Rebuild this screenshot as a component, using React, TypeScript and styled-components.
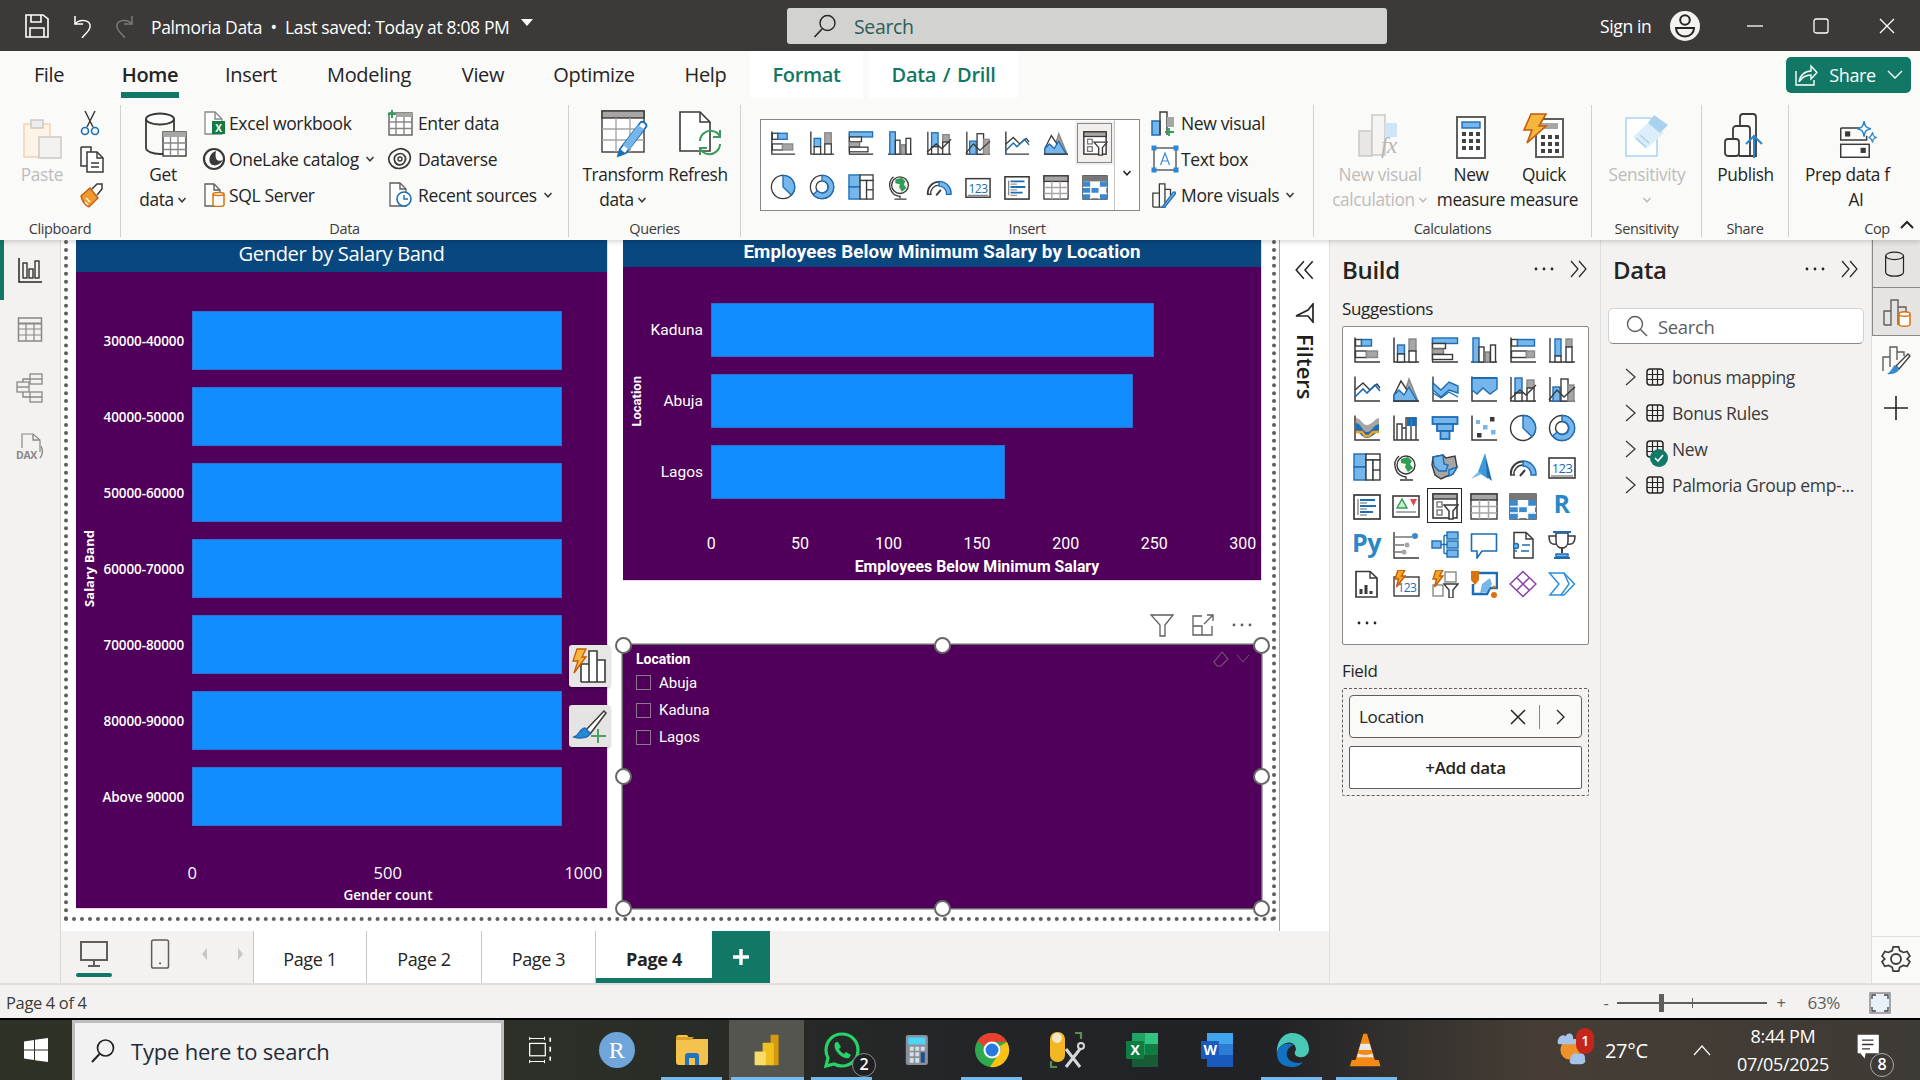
import React from 'react';
import styled, { createGlobalStyle } from 'styled-components';

const D = '#3b3a39';
const B = '#1b6db5';
const L = '#77b6ea';
const G = '#a8a6a4';
const W = '#ffffff';
const TEAL = '#117865';
const FONT = '"Open Sans", "Noto Sans", sans-serif';
const CHART_FONT = 'Roboto, "Liberation Sans", sans-serif';

const Global = createGlobalStyle`
  html, body { margin: 0; padding: 0; background: #f3f2f1; }
  body { font-family: ${FONT}; color: #252423; letter-spacing: -0.022em; }
  * { box-sizing: border-box; }
  svg { display: block; flex: none; }
`;

const Page = styled.div`
  width: 1920px; height: 1080px; overflow: hidden; display: flex; flex-direction: column; position: relative;
`;

/* ---------- Icon helpers ---------- */
const Ico: React.FC<{ s?: number; v?: number; children: React.ReactNode }> = ({ s = 28, v = 28, children }) => (
  <svg width={s} height={s} viewBox={`0 0 ${v} ${v}`} fill="none" strokeWidth={1.4}>{children}</svg>
);
const Axis = () => <path d="M2 1.5V26H27" stroke={D} strokeWidth={1.5} />;
const Base = () => <path d="M1 26H27" stroke={D} strokeWidth={1.5} />;

const mini: Record<string, React.ReactNode> = {
  stackedBar: <><Axis /><rect x="2.5" y="3.5" width="6" height="6.5" fill={W} stroke={D} /><rect x="8.5" y="3.5" width="10" height="6.5" fill={L} stroke={B} /><rect x="2.5" y="15" width="11" height="6.5" fill={W} stroke={D} /><rect x="13.5" y="15" width="11" height="6.5" fill={G} stroke={'#888'} /></>,
  stackedCol: <><Axis /><rect x="5.5" y="9" width="7" height="9" fill={L} stroke={B} /><rect x="5.5" y="18" width="7" height="8" fill={W} stroke={D} /><rect x="17" y="3" width="7" height="12" fill={G} stroke={'#888'} /><rect x="17" y="15" width="7" height="11" fill={W} stroke={D} /></>,
  clusteredBar: <><Base /><path d="M1.5 2V26" stroke={D} /><rect x="1.5" y="2" width="25" height="5.5" fill={L} stroke={B} /><rect x="1.5" y="7.5" width="13" height="5" fill={W} stroke={D} /><rect x="1.5" y="13" width="11" height="5" fill={G} stroke={'#777'} /><rect x="1.5" y="18.5" width="20" height="5" fill={W} stroke={D} /></>,
  clusteredCol: <><Base /><rect x="3" y="2" width="6" height="24" fill={L} stroke={B} /><rect x="9" y="11" width="5" height="15" fill={W} stroke={D} /><rect x="15" y="16" width="5" height="10" fill={G} stroke={'#777'} /><rect x="20.5" y="9" width="5" height="17" fill={W} stroke={D} /></>,
  bar100: <><Axis /><rect x="2.5" y="3.5" width="6" height="6.5" fill={W} stroke={D} /><rect x="8.5" y="3.5" width="17" height="6.5" fill={L} stroke={B} /><rect x="2.5" y="15" width="15" height="6.5" fill={W} stroke={D} /><rect x="17.5" y="15" width="8" height="6.5" fill={G} stroke={'#888'} /></>,
  col100: <><Base /><path d="M2 2V26" stroke={D} /><rect x="7" y="3" width="6" height="17" fill={L} stroke={B} /><rect x="7" y="20" width="6" height="6" fill={W} stroke={D} /><rect x="18" y="3" width="6" height="8" fill={G} stroke={'#888'} /><rect x="18" y="11" width="6" height="15" fill={W} stroke={D} /></>,
  line: <><Axis /><path d="M2 15L10 8L17 15L24 9L27 13" stroke={D} /><path d="M2 22L10 14L14 18L22 10L27 16" stroke={B} strokeWidth={1.6} /></>,
  area: <><path d="M17 4L26 26H10Z" fill={G} stroke="#8a8886" /><path d="M2 20L9 6L15 15L10 26H2Z" fill={W} stroke={D} /><path d="M2 26V20L7 15L12 20L17 12L25 26Z" fill={L} stroke={B} /><Base /></>,
  stackedArea: <><path d="M2 1.5V26H27" stroke={D} /><path d="M2 8L10 15L18 7L27 11V18L18 15L10 22L2 15Z" fill={L} stroke={B} /><path d="M2 18L10 23L18 17L27 22" stroke={B} /></>,
  area100: <><Axis /><path d="M2 3H27V14L20 19L13 13L7 19L2 15Z" fill={L} stroke={B} /><path d="M2 3H27" stroke={B} strokeWidth={2} /></>,
  lineCol: <><Base /><path d="M2 2V26" stroke={D} /><rect x="6" y="3" width="7" height="15" fill={L} stroke={B} /><rect x="6" y="18" width="7" height="8" fill={W} stroke={D} /><rect x="18" y="5" width="7" height="8" fill={G} stroke="#888" /><rect x="18" y="13" width="7" height="13" fill={W} stroke={D} /><path d="M1 24L11 15L17 20L27 10" stroke={D} /></>,
  lineCol2: <><Base /><path d="M2 2V26" stroke={D} /><rect x="5" y="12" width="7" height="14" fill={L} stroke={B} /><rect x="13" y="4" width="7" height="22" fill={W} stroke={D} /><rect x="20" y="10" width="6" height="16" fill={G} stroke="#888" /><path d="M1 25L9 15L16 22L27 12" stroke={D} /></>,
  ribbon: <><Axis /><path d="M3 4C9 5 9 11 14 11S21 5 26 4V13C21 14 19 19 14 19S8 14 3 13Z" fill={G} /><path d="M3 9C9 10 9 18 14 18S20 11 26 10V18C21 19 19 24 14 24S8 19 3 18Z" fill={B} /><path d="M3 18H9L12 22H16L20 18H26" stroke="#f4a020" strokeWidth={2.5} /></>,
  waterfall: <><Axis /><path d="M5 26V10H10V26M10 14H14V26M14 14V4H19V18M19 4H24V26M19 18V26" stroke={D} /><rect x="15" y="4" width="4" height="8" fill={B} /><rect x="20" y="3" width="4.5" height="9" fill={B} /></>,
  funnel: <><rect x="1.5" y="3" width="25" height="7" fill={L} stroke={B} strokeWidth={1.8} /><rect x="6" y="10" width="16" height="7" fill={L} stroke={B} strokeWidth={1.8} /><rect x="9.5" y="17" width="9" height="8" fill={L} stroke={B} strokeWidth={1.8} /></>,
  scatter: <><Axis /><rect x="6" y="6" width="4" height="4" fill={L} /><rect x="20" y="3" width="4.5" height="4.5" fill={D} /><rect x="13" y="11" width="4.5" height="4.5" fill={L} /><rect x="7" y="19" width="4.5" height="4.5" fill={D} /><rect x="21" y="16" width="4.5" height="4.5" fill={L} /></>,
  pie: <><circle cx="14" cy="14" r="12.5" fill={W} stroke={D} /><path d="M14 1.5A12.5 12.5 0 0 1 23 22.7L14 14Z" fill={L} stroke={B} /></>,
  donut: <><circle cx="14" cy="14" r="12.5" stroke={D} fill={W} /><circle cx="14" cy="14" r="6.5" stroke={D} fill={W} /><path d="M14 1.5A12.5 12.5 0 1 1 4.5 22L9.2 18A6.5 6.5 0 1 0 14 7.5Z" fill={L} stroke={B} /></>,
  treemap: <><rect x="1" y="1" width="12" height="13" fill={L} stroke={B} /><rect x="1" y="14" width="12" height="13" fill={L} stroke={B} /><rect x="13" y="1" width="14" height="6" fill={W} stroke={D} /><rect x="13" y="7" width="7" height="20" fill={W} stroke={D} /><rect x="20" y="7" width="7" height="20" fill={W} stroke={D} /><path d="M20 17H27" stroke={D} /></>,
  globe: <><circle cx="14" cy="12" r="9" fill="#f4f8f2" stroke={D} /><path d="M9 6L16 4L20 8L18 11L21 15L16 19L13 14L14 11L9 10Z" fill="#2f9e58" /><path d="M7 3A12 12 0 0 0 14 24V26M8 27H21" stroke={D} /></>,
  filledMap: <><path d="M2 4L12 2L15 5L24 3L26 14L22 21L14 24L10 26L4 22L1 12Z" fill={G} stroke={D} /><path d="M2 4L12 2L13 11L17 12L15 18H8L3 13Z" fill={L} stroke={B} /><path d="M18 17L26 14L22 21L18 23Z" fill={L} stroke={B} /></>,
  azure: <><path d="M15 0L18 26L8 19Z" fill="#3f9bd8" /><path d="M15 0L22 28L17 24Z" fill="#1f6fb0" /><path d="M8 19L1 26L12 21Z" fill="#76bde8" /></>,
  gauge: <><path d="M2 22A12 12 0 0 1 14 8.5" stroke={D} strokeWidth={2} /><path d="M5 22A9 9 0 0 1 14 12" stroke={D} /><path d="M14 8A13 13 0 0 1 27 22H22A8 8 0 0 0 14 13Z" fill={L} stroke={B} /><path d="M11 23L16 17" stroke={D} strokeWidth={2} /><path d="M1 22H6" stroke={D} /></>,
  card: <><rect x="1" y="5" width="26" height="20" fill={W} stroke={D} strokeWidth={1.6} /><text x="14" y="20" fontSize="13" fill={B} textAnchor="middle" fontFamily="Open Sans" letterSpacing="-0.6">123</text><path d="M3 23H25" stroke="#888" /></>,
  multirow: <><rect x="1" y="3" width="26" height="24" fill={W} stroke={D} strokeWidth={1.7} /><path d="M5 7V23" stroke="#888" /><path d="M7 8H22M7 14H23M7 20H20" stroke={B} strokeWidth={2} /><path d="M7 11H14M7 17H14M7 23H14" stroke="#999" /></>,
  kpi: <><rect x="1" y="4" width="26" height="21" fill={W} stroke={D} strokeWidth={1.6} /><path d="M5 16L10 7L15 16Z" fill="#c7ead0" stroke="#2f9e58" /><path d="M18 7H25L21.5 14Z" fill="#e5454c" /><path d="M4 20H24" stroke="#888" /></>,
  slicer: <><rect x="2" y="2" width="24" height="24" fill={W} stroke={D} strokeWidth={1.6} /><rect x="2" y="2" width="24" height="5" fill={G} stroke={D} /><rect x="6" y="10" width="5" height="5" fill={W} stroke={'#777'} /><rect x="6" y="18" width="5" height="5" fill={W} stroke={'#777'} /><path d="M13 13H27L22 19V27H18V19Z" fill={W} stroke={D} strokeWidth={1.5} /></>,
  table: <><rect x="1" y="2" width="26" height="25" fill={W} stroke={D} /><rect x="1" y="2" width="26" height="6" fill={G} stroke={D} /><path d="M1 14.5H27M1 21H27M9.5 8V27M18.5 8V27" stroke={G} strokeWidth={1.5} /></>,
  matrix: <><rect x="1" y="2" width="26" height="25" fill={W} stroke={D} /><rect x="1" y="2" width="26" height="6" fill={'#777'} /><rect x="1" y="8" width="8.5" height="19" fill={'#3a8ad0'} /><rect x="9.5" y="14" width="9" height="6.5" fill={'#3a8ad0'} /><rect x="18.5" y="8" width="8.5" height="6" fill={'#3a8ad0'} /><rect x="18.5" y="20.5" width="8.5" height="6.5" fill={'#3a8ad0'} /><path d="M1 14.5H27M1 21H27M9.5 8V27M18.5 8V27" stroke={W} /></>,
  influencers: <><path d="M2 1V27H27" stroke={D} /><path d="M2 6H20M2 14H12M2 21H10" stroke="#777" /><circle cx="23" cy="5" r="3" fill={'#3a8ad0'} /><circle cx="15" cy="14" r="2.5" fill={G} /><circle cx="12" cy="21" r="2.5" fill={G} /></>,
  decomp: <><rect x="1" y="10" width="9" height="7" fill={L} stroke={B} /><rect x="16" y="1" width="11" height="7" fill={L} stroke={B} /><rect x="16" y="10" width="11" height="7" fill={L} stroke={B} /><rect x="16" y="19" width="11" height="7" fill={L} stroke={B} /><path d="M10 13.5H16M13 4.5V22.5M13 4.5H16M13 22.5H16" stroke={B} /></>,
  qna: <><path d="M1.5 3H26.5V20H12L7 27V20H1.5Z" fill={W} stroke={B} strokeWidth={1.6} /></>,
  narrative: <><path d="M5 1.5H17L24 8V27H5Z" fill={W} stroke={D} strokeWidth={1.5} /><path d="M17 1.5V8H24" stroke={D} /><circle cx="7" cy="15" r="2.5" fill={L} stroke={B} /><path d="M13 14H21M5 20H8M12 20H20" stroke={B} strokeWidth={1.5} /></>,
  trophy: <><path d="M8 2H20V10C20 15 17 17 14 17S8 15 8 10Z" fill={W} stroke={D} strokeWidth={1.5} /><path d="M5 0.8H23" stroke={B} strokeWidth={2.5} /><path d="M8 5H1C1 12 4 14 8 13M20 5H27C27 12 24 14 20 13" stroke={D} strokeWidth={1.5} /><path d="M14 17V22" stroke={D} strokeWidth={2} /><path d="M8 26V23H20V26Z" fill={L} stroke={B} /><path d="M6 27H22" stroke={B} strokeWidth={2} /></>,
  paginated: <><path d="M3 1.5H17L24 8V27H3Z" fill={W} stroke={D} strokeWidth={1.7} /><path d="M17 1.5V8H24" stroke={D} /><path d="M8 24V19M13 24V15M18 24V21" stroke={D} strokeWidth={3} /></>,
  quickCard: <><rect x="2" y="7" width="25" height="19" fill={W} stroke={D} strokeWidth={1.4} /><text x="15" y="22" fontSize="12" fill={B} textAnchor="middle" fontFamily="Open Sans" letterSpacing="-0.6">123</text><path d="M6 0H13L9.5 6H13L4.5 17L6.5 9H3Z" fill="#f6a623" stroke="#c55a0b" /></>,
  quickSlicer: <><rect x="14" y="2" width="11" height="10" fill={W} stroke={'#8a8886'} /><rect x="2" y="15" width="10" height="11" fill={W} stroke={'#8a8886'} /><path d="M13 14H27L22 20V28H18V20Z" fill={W} stroke={D} strokeWidth={1.4} /><path d="M5 0H12L8.5 6H12L3.5 17L5.5 9H2Z" fill="#f6a623" stroke="#c55a0b" /></>,
  shapePin: <><path d="M8 3H27V18H20L17 24H3V14" stroke={B} strokeWidth={2.5} fill={W} /><path d="M12 14L20 8L22 14L17 22L10 23Z" fill={L} /><path d="M1 1H9V10L5 15L1 10Z" fill="#d9730d" /><circle cx="24" cy="25" r="3" fill="#d9730d" /><circle cx="24" cy="17" r="1.6" fill="#d9730d" /></>,
  powerApps: <><path d="M14 1.5L27 14L14 26.5L1 14Z" stroke="#8a3ea8" strokeWidth={1.5} /><path d="M8 8L20 20M20 8L8 20" stroke="#8a3ea8" strokeWidth={1.5} /></>,
  automate: <><path d="M1.5 3H16L26.5 14L16 25H2L11 14Z" stroke="#2b8fdc" strokeWidth={1.5} /><path d="M16 3L21 14L13 25" stroke="#2b8fdc" strokeWidth={1.5} /></>,
};

const Mini: React.FC<{ n: string; s?: number }> = ({ n, s = 28 }) => <Ico s={s}>{mini[n]}</Ico>;

/* ---------- Title bar ---------- */
const TitleBar = styled.header`
  height: 51px; background: #3b3a39; color: #fff; display: grid; grid-template-columns: 787px 600px 1fr; align-items: center; flex: none;
`;
const TitleLeft = styled.div`display: flex; align-items: center; padding-left: 24px;`;
const TitleText = styled.span`font-size: 17.5px; white-space: nowrap; margin-left: 15px; padding-top: 3px;`;
const Caret = styled.span`
  width: 0; height: 0; border-left: 6px solid transparent; border-right: 6px solid transparent; border-top: 7px solid #fff; margin-left: 11px; margin-top: -6px;
`;
const QuickBtn = styled.span<{ $w: number }>`width: ${p => p.$w}px; display: flex; align-items: center;`;
const SearchBar = styled.div`
  height: 36px; background: #d2d2d0; border-radius: 3px; display: flex; align-items: center; padding-left: 26px; gap: 17px;
  font-size: 19.5px; color: #2d5e58;
  & > span { padding-top: 2px; }
`;
const TitleRight = styled.div`display: flex; align-items: center; padding-left: 213px; font-size: 17.5px; white-space: nowrap; & > span:first-child { padding-top: 1px; width: 54px; }`;
const Avatar = styled.span`
  width: 30px; height: 30px; border-radius: 50%; background: #f3f2f1; display: flex; align-items: center; justify-content: center; margin-left: 16px; margin-right: 22px;
`;
const WinBtn = styled.span`width: 66px; display: flex; justify-content: center;`;

/* ---------- Ribbon ---------- */
const Ribbon = styled.section`
  height: 189px; background: #fafaf9; flex: none; position: relative; z-index: 2; box-shadow: 0 2px 5px rgba(0,0,0,.16); display: flex; flex-direction: column;
`;
const TabRow = styled.nav`height: 49px; display: flex; align-items: flex-start; font-size: 20px; flex: none;`;
const Tab = styled.div<{ $w: number; $ml: number; $on?: boolean }>`
  width: ${p => p.$w}px; margin-left: ${p => p.$ml}px; height: 47px; line-height: 47px; text-align: center; white-space: nowrap; display: flex; justify-content: center;
  border-bottom: ${p => (p.$on ? `6px solid ${TEAL}` : '0')};
  font-weight: ${p => (p.$on ? 600 : 400)};
`;
const ContextTab = styled.div<{ $w: number; $ml: number }>`
  width: ${p => p.$w}px; margin-left: ${p => p.$ml}px; height: 47px; line-height: 47px; text-align: center; background: #fff; color: ${TEAL}; font-weight: 600; white-space: nowrap; word-spacing: 2px;
`;
const ShareBtn = styled.button`
  margin-left: auto; margin-right: 9px; margin-top: 6px; width: 125px; height: 36px; background: ${TEAL}; border: 0; border-radius: 5px; color: #fff; font: 400 18px ${FONT}; letter-spacing: -0.02em;
  display: flex; align-items: center; justify-content: center; gap: 11px;
`;
const Groups = styled.div`display: flex; flex: 1; min-height: 0;`;
const Group = styled.div<{ $w: number; $end?: boolean }>`
  width: ${p => p.$w}px; margin: 5px 0 3px; display: flex; flex-direction: column; flex: none; position: relative;
  border-right: ${p => (p.$end ? '0' : '1px solid #d2d0ce')};
`;
const GroupBody = styled.div`flex: 1; display: flex; align-items: flex-start; min-height: 0;`;
const GroupLabel = styled.div<{ $pl?: number }>`
  height: 16px; line-height: 16px; font-size: 14.5px; text-align: center; color: #3b3a39; padding-left: ${p => p.$pl ?? 0}px; white-space: nowrap;
`;
const Large = styled.div<{ $w: number; $ml?: number; $dim?: boolean }>`
  width: ${p => p.$w}px; margin-left: ${p => p.$ml ?? 0}px; padding-top: 5px; display: flex; flex-direction: column; align-items: center; flex: none;
  font-size: 17.3px; line-height: 25px; white-space: nowrap; color: ${p => (p.$dim ? '#bebcba' : '#252423')};
`;
const LargeIcon = styled.div<{ $nudge?: number }>`height: 52px; display: flex; align-items: flex-end; justify-content: center; padding-bottom: 3px; margin-left: ${p => p.$nudge ?? 0}px;`;
const LabelLine = styled.div`display: flex; align-items: center; gap: 3px; height: 25px;`;
const LeftLine = styled.div`width: 86px; height: 25px; margin-right: 16px;`;
const SmallCol = styled.div<{ $w?: number; $ml?: number }>`
  width: ${p => (p.$w ? `${p.$w}px` : 'auto')}; margin-left: ${p => p.$ml ?? 0}px; display: flex; flex-direction: column; flex: none;
`;
const SmallRow = styled.div<{ $iw: number }>`
  height: 36px; display: flex; align-items: center; font-size: 17.5px; white-space: nowrap;
  & > span:first-child { width: ${p => p.$iw}px; display: flex; flex: none; }
`;
const Chev = styled.span<{ $ml?: number }>`display: inline-flex; margin-left: ${p => p.$ml ?? 4}px;`;
const Gallery = styled.div`
  margin: 14px 0 0 19px; width: 380px; height: 92px; border: 1px solid #8a8886; background: #fff; display: grid; grid-template-columns: 1fr 25px; flex: none;
`;
const GalleryGrid = styled.div`
  display: grid; grid-template-columns: repeat(9, 39px); grid-auto-rows: 44px; padding: 1px 0 0 2px;
`;
const GalleryCell = styled.div<{ $on?: boolean }>`
  display: flex; align-items: center; justify-content: center;
  ${p => p.$on && 'background: #f0efee; outline: 1px solid #8a8886; outline-offset: -3px;'}
`;
const GalleryMore = styled.div`border-left: 1px solid #c8c6c4; display: flex; align-items: flex-end; justify-content: center; padding-bottom: 32px;`;
const CollapseCaret = styled.span`position: absolute; right: 6px; bottom: 8px;`;

const ChevDown: React.FC<{ c?: string; s?: number }> = ({ c = '#3b3a39', s = 10 }) => (
  <svg width={s} height={s} viewBox="0 0 10 10" fill="none"><path d="M1.5 3L5 6.8L8.5 3" stroke={c} strokeWidth={1.5} /></svg>
);

/* ---------- Workspace ---------- */
const Workspace = styled.main`flex: 1; display: flex; min-height: 0; background: #f3f2f1;`;
const LeftRail = styled.aside`width: 61px; border-right: 1px solid #d8d6d4; flex: none;`;
const RailItem = styled.div<{ $on?: boolean }>`
  height: 59px; display: flex; align-items: center; justify-content: center; position: relative; padding-right: 0;
  ${p => p.$on && `&::before { content: ''; position: absolute; left: 0; top: 0; width: 4px; height: 60px; background: ${TEAL}; }`}
`;
const Center = styled.div`width: 1268px; display: flex; flex-direction: column; flex: none;`;
const CanvasRow = styled.div`height: 691px; display: flex; background: #fff;`;
const ReportArea = styled.div`width: 1219px; border-right: 1px solid #a8a6a4; padding: 0 3px 0 3px; flex: none;`;
const ReportPage = styled.div`
  width: 1212px; height: 681px; border-left: 4px dotted #5f5e5c; border-right: 4px dotted #5f5e5c; border-bottom: 4px dotted #5f5e5c; padding: 0 10px 0 8px;
  display: grid; grid-template-columns: 531px 638px; column-gap: 16px; position: relative; align-items: start;
`;
const Visual = styled.div<{ $h: number }>`height: ${p => p.$h}px; background: #50005a; color: #fff; display: flex; flex-direction: column; box-shadow: 0 1px 0 #e9d9ee, 1px 0 0 #e9d9ee;`;
const VisualTitle = styled.div<{ $h: number; $alt?: boolean }>`
  height: ${p => p.$h}px; flex: none; background: #09477f; text-align: center; color: #fff;
  font: ${p => (p.$alt ? `700 18.8px/24px ${CHART_FONT}` : `500 20.2px/${p.$h - 6}px ${FONT}`)};
  letter-spacing: ${p => (p.$alt ? '0.1px' : '-0.4px')};
`;
const Plot = styled.div<{ $top: number }>`display: flex; padding-top: ${p => p.$top}px; align-items: center;`;
const YTitle = styled.div<{ $w: number; $alt?: boolean }>`
  writing-mode: vertical-rl; transform: rotate(180deg); width: ${p => p.$w}px; text-align: center; flex: none; white-space: nowrap; display: flex; align-items: center;
  font: 700 ${p => (p.$alt ? `13px ${CHART_FONT}` : `13px ${FONT}`)}; letter-spacing: 0;
`;
const Rows = styled.div<{ $gap: number }>`display: flex; flex-direction: column; gap: ${p => p.$gap}px;`;
const BarRow = styled.div<{ $h: number }>`display: flex; align-items: center; height: ${p => p.$h}px;`;
const CatLabel = styled.div<{ $w: number; $alt?: boolean }>`
  width: ${p => p.$w}px; padding-right: 8px; text-align: right; white-space: nowrap; flex: none;
  font: ${p => (p.$alt ? `400 15.5px ${CHART_FONT}` : `600 13.5px ${FONT}`)}; letter-spacing: ${p => (p.$alt ? '0' : '-0.1px')};
`;
const Bar = styled.div`height: 100%; background: #118dff; border: 1px solid #2f6ed0;`;
const Ticks = styled.div<{ $n: number; $cell: number; $ml: number; $mt: number; $alt?: boolean }>`
  display: grid; grid-template-columns: repeat(${p => p.$n}, ${p => p.$cell}px); margin-left: ${p => p.$ml}px; margin-top: ${p => p.$mt}px; text-align: center;
  font: ${p => (p.$alt ? `400 16px/20px ${CHART_FONT}` : `400 16.5px/20px ${FONT}`)}; letter-spacing: 0;
`;
const XTitle = styled.div<{ $w: number; $mt: number; $alt?: boolean }>`
  width: ${p => p.$w}px; text-align: center; margin-top: ${p => p.$mt}px; white-space: nowrap;
  font: ${p => (p.$alt ? `700 15.8px/18px ${CHART_FONT}` : `600 13.5px/18px ${FONT}`)}; letter-spacing: 0;
`;
const RightStack = styled.div`display: flex; flex-direction: column; gap: 65px;`;
const Slicer = styled.div`
  height: 263px; background: #50005a; box-shadow: 0 0 0 1.5px #666; color: #fff; position: relative; padding: 6px 13px;
`;
const SlicerTitle = styled.div`font: 700 14px/16px ${CHART_FONT}; letter-spacing: 0;`;
const SlicerItem = styled.div`display: flex; align-items: center; gap: 8px; height: 27.4px; font: 400 15px ${CHART_FONT}; letter-spacing: 0;`;
const SlicerList = styled.div`margin-top: 2px;`;
const Check = styled.span`width: 15px; height: 15px; border: 1px solid #8a7a8d; flex: none;`;
const SlicerTools = styled.div`position: absolute; right: 11px; top: 5px; display: flex; gap: 6px; align-items: center;`;
const Handle = styled.span<{ $l: string; $t: string }>`
  position: absolute; left: ${p => p.$l}; top: ${p => p.$t}; width: 17px; height: 17px; margin: -8.5px 0 0 -8.5px; background: #fff; border: 2.5px solid #666; border-radius: 50%;
`;
const VisualHead = styled.div`position: absolute; right: 9px; top: -32px; display: flex; align-items: center; gap: 18px;`;
const Float = styled.div<{ $top: number; $alt?: boolean }>`
  position: absolute; left: 501px; top: ${p => p.$top}px; width: 41px; height: 42px; background: ${p => (p.$alt ? '#e6e4e2' : '#e8e6e4')}; border-radius: 3px; box-shadow: 0 1px 3px rgba(0,0,0,.3);
  display: flex; align-items: center; justify-content: center;
`;
const FiltersPane = styled.div`
  flex: 1; background: #fff; display: flex; flex-direction: column; align-items: center; padding: 19px 0 0 0;
`;
const FilterIconSlot = styled.div`margin-top: 22px;`;
const FiltersText = styled.div`writing-mode: vertical-rl; font: 600 22px/24px ${FONT}; margin-top: 11px; letter-spacing: 0; color: #201f1e; margin-left: 2px;`;
const PageBar = styled.div`height: 52px; display: flex; align-items: stretch;`;
const Devices = styled.div`width: 192px; display: flex; align-items: center; position: relative; padding-left: 15px; flex: none;`;
const DeviceBtn = styled.span<{ $w: number; $on?: boolean; $ml?: number }>`
  width: ${p => p.$w}px; margin-left: ${p => p.$ml ?? 0}px; height: 52px; display: flex; align-items: center; justify-content: center; position: relative; flex: none; padding-bottom: 6px;
  ${p => p.$on && `&::after { content: ''; position: absolute; left: 0; right: 0; bottom: 6px; height: 4px; border-radius: 2px; background: ${TEAL}; }`}
`;
const PagerArrows = styled.span`margin-left: 25px; padding-bottom: 6px;`;
const PageTab = styled.div<{ $w: number; $on?: boolean }>`
  width: ${p => p.$w}px; background: #fff; border-left: 1px solid #c8c6c4; display: flex; align-items: center; justify-content: center; font-size: 18px; padding-top: 3px; flex: none;
  font-weight: ${p => (p.$on ? 700 : 400)};
  box-shadow: ${p => (p.$on ? `inset 0 -5px 0 ${TEAL}` : 'none')};
`;
const AddPage = styled.div`width: 58px; background: ${TEAL}; display: flex; align-items: center; justify-content: center; color: #fff;`;

/* ---------- Side panes ---------- */
const Pane = styled.aside`width: 271px; border-left: 1px solid #e1dfdd; background: #f3f2f1; flex: none;`;
const PaneHead = styled.div`height: 60px; padding: 0 12px 2px 12px; display: flex; align-items: center; justify-content: space-between;`;
const PaneTitle = styled.h2`margin: 0; font: 600 24px ${FONT}; letter-spacing: -0.3px; color: #252423;`;
const PaneTools = styled.div`display: flex; align-items: center; gap: 14px;`;
const BuildBody = styled.div`padding: 0 12px 0 12px;`;
const Caption = styled.div<{ $mt?: number }>`font-size: 17px; line-height: 18px; margin-top: ${p => p.$mt ?? 0}px;`;
const SuggestBox = styled.div`
  margin-top: 8px; width: 247px; height: 319px; background: #fff; border: 1px solid #8a8886; border-radius: 2px; padding: 3px 0 0 4px;
  display: grid; grid-template-columns: repeat(6, 39px); grid-auto-rows: 39px;
`;
const SuggestCell = styled.div<{ $on?: boolean }>`
  display: flex; align-items: center; justify-content: center;
  ${p => p.$on && 'outline: 1.5px solid #252423; outline-offset: -3px;'}
`;
const LetterIcon = styled.span<{ $s: number }>`font: 700 ${p => p.$s}px/1 ${FONT}; color: #2b88c8; letter-spacing: -0.5px; margin-top: -4px;`;
const MoreDots = styled.div`display: flex; align-items: center; justify-content: center; font-size: 20px;`;
const DropZone = styled.div`
  margin-top: 8px; width: 247px; height: 108px; border: 1px dashed #605e5c; border-radius: 2px; padding: 6px; display: flex; flex-direction: column; gap: 8px;
`;
const FieldPill = styled.div`
  height: 43px; border: 1px solid #605e5c; border-radius: 4px; background: #fafaf9; display: flex; align-items: center; padding: 0 13px 0 9px; font-size: 17px;
`;
const FieldName = styled.span`flex: 1;`;
const FieldDivider = styled.span`width: 1.5px; height: 24px; background: #8a8886; margin: 0 12px;`;
const AddData = styled.div`
  height: 43px; border: 1px solid #605e5c; border-radius: 2px; background: #fff; display: flex; align-items: center; justify-content: center; font-weight: 600; font-size: 17px;
`;
const DataSearch = styled.div`
  margin: 8px 7px 0 7px; height: 36px; background: #fff; border: 1px solid #d2d0ce; border-bottom: 1px solid #8a8886; border-radius: 5px; display: flex; align-items: center; padding-left: 17px; gap: 10px;
  font-size: 18.5px; color: #605e5c;
`;
const Tree = styled.div`margin-top: 15px;`;
const TreeRow = styled.div`height: 36px; display: flex; align-items: center; padding-left: 23px; font-size: 17.5px; color: #3b3a39; white-space: nowrap; position: relative;`;
const TreeGap = styled.span<{ $w: number }>`width: ${p => p.$w}px; flex: none;`;
const Badge = styled.span`
  position: absolute; left: 49px; top: 18px; width: 18px; height: 18px; border-radius: 50%; background: ${TEAL}; display: flex; align-items: center; justify-content: center;
`;
const RightRail = styled.aside`width: 49px; background: #fafaf9; border-left: 1px solid #e1dfdd; display: flex; flex-direction: column; flex: none;`;
const RailTab = styled.div<{ $h: number; $on?: boolean }>`
  height: ${p => p.$h}px; display: flex; align-items: center; justify-content: center; flex: none;
  ${p => p.$on && 'background: #e6e4e2; border: 1px solid #8a8886; border-width: 0 0 1.5px 1.5px;'}
`;
const RailBottom = styled.div`margin-top: auto; height: 47px; border-top: 1px solid #e1dfdd; display: flex; align-items: center; justify-content: center; padding-bottom: 2px;`;

/* ---------- Status bar ---------- */
const StatusBar = styled.footer`
  height: 35px; flex: none; border-top: 2px solid #e1dfdd; background: #f3f2f1; display: flex; align-items: center; padding: 2px 0 0 6px; font-size: 16.5px; color: #3b3a39;
`;
const Zoom = styled.div`margin-left: auto; display: flex; align-items: center; color: #605e5c;`;
const ZoomTrack = styled.div`width: 150px; height: 2px; background: #605e5c; position: relative; margin: 0 9px;`;
const ZoomThumb = styled.span`position: absolute; left: 42px; top: -8px; width: 5px; height: 18px; background: #605e5c;`;
const ZoomTick = styled.span`position: absolute; left: 75px; top: -4px; width: 1px; height: 10px; background: #605e5c;`;
const ZoomPct = styled.span`margin: 0 29px 0 22px; font-size: 17px;`;
const FitBox = styled.span`margin-right: 29px; display: flex;`;

/* ---------- Taskbar ---------- */
const Taskbar = styled.div`
  height: 62px; flex: none; border-top: 2px solid #000; display: flex; align-items: stretch; color: #fff;
  background: linear-gradient(90deg, #2e3226 0%, #2c2f27 30%, #232427 52%, #212226 66%, #463e35 80%, #3e3a35 100%);
`;
const StartBtn = styled.div`width: 72px; display: flex; align-items: center; justify-content: center;`;
const TaskSearch = styled.div`
  width: 432px; background: #f2f2f2; border: 3px solid #bdbdbd; border-bottom: 0; display: flex; align-items: center; padding: 0 0 2px 15px; gap: 15px; color: #1f2b3a; font-size: 22px; letter-spacing: -0.2px;
`;
const TaskApp = styled.div<{ $open?: boolean; $active?: boolean; $pl?: number }>`
  width: 75px; padding-left: ${p => p.$pl ?? 0}px; display: flex; align-items: center; justify-content: center; position: relative; flex: none;
  background: ${p => (p.$active ? '#55554f' : 'transparent')};
  ${p => p.$open && `&::after { content: ''; position: absolute; left: ${p.$active ? 2 : 7}px; right: ${p.$active ? 0 : 7}px; bottom: 0; height: 3px; background: #76b9ed; }`}
`;
const RoundR = styled.span`
  width: 36px; height: 36px; border-radius: 50%; background: #6fa5da; font: 400 24px/36px "Liberation Serif", serif; text-align: center; color: #fff;
`;
const CountBadge = styled.span`
  position: absolute; right: 3px; bottom: 3px; width: 24px; height: 24px; border: 1.5px solid #8a8a8a; border-radius: 50%; background: #1f2023; font: 600 16px/21px ${FONT}; text-align: center; color: #fff;
`;
const Tray = styled.div`width: 516px; padding-left: 150px; display: flex; align-items: center; position: relative; flex: none;`;
const Temp = styled.span`font-size: 20px; margin-left: 11px; width: 80px; margin-right: 8px;`;
const Clock = styled.div`margin-left: 7px; width: 130px; text-align: center; font-size: 18px; line-height: 28px;`;
const Notify = styled.div`width: 50px; margin-left: -3px; display: flex; justify-content: center; position: relative; height: 100%; align-items: center; padding-bottom: 4px;`;
const TrayBadge = styled.span`
  position: absolute; left: 25px; bottom: 3px; width: 24px; height: 24px; border: 1.5px solid #aaa; border-radius: 50%; background: #3e3a35; font: 600 16px/21px ${FONT}; text-align: center;
`;
const WeatherWrap = styled.div`position: relative; width: 40px; height: 44px;`;
const WeatherBadge = styled.span`
  position: absolute; right: 0; top: 0; width: 18px; height: 26px; border-radius: 9px; background: #c4261d; font: 600 14px/26px ${FONT}; text-align: center;
`;

/* ---------- Ribbon icons ---------- */
const I = {
  save: <Ico s={26} v={26}><path d="M2 2H19L24 6V24H2Z" stroke="#fff" strokeWidth={1.6} /><path d="M7 2V9H17V2M6 24V15H20V24" stroke="#fff" strokeWidth={1.6} /></Ico>,
  undo: <Ico s={24} v={24}><path d="M5 2V10H13" stroke="#fff" strokeWidth={1.5} /><path d="M5 10C10 4 21 6 20 13C19.5 17 15 20 12 24" stroke="#fff" strokeWidth={1.5} /></Ico>,
  redo: <Ico s={24} v={24}><path d="M19 2V10H11" stroke="#7b7a79" strokeWidth={1.5} /><path d="M19 10C14 4 3 6 4 13C4.5 17 9 20 12 24" stroke="#7b7a79" strokeWidth={1.5} /></Ico>,
  search: <Ico s={24} v={24}><circle cx="14.5" cy="9" r="7.5" stroke="#252423" strokeWidth={1.4} /><path d="M9 15L1.5 23" stroke="#252423" strokeWidth={1.6} /></Ico>,
  person: <Ico s={26} v={26}><circle cx="13" cy="7" r="4.8" stroke="#252423" strokeWidth={2} /><path d="M4 15H22C22 20 18 23.5 13 23.5S4 20 4 15Z" stroke="#252423" strokeWidth={2} /></Ico>,
  paste: <Ico s={42} v={42}><rect x="3" y="7" width="26" height="33" fill="#fdf3e6" stroke="#f2d3ae" strokeWidth={1.5} /><rect x="10" y="3" width="12" height="8" fill="#efeeed" stroke="#c8c6c4" /><rect x="18" y="20" width="22" height="21" fill="#f3f2f1" stroke="#c8c6c4" /></Ico>,
  cut: <Ico s={26} v={26}><path d="M8 1L16 17M18 1L10 17" stroke={D} strokeWidth={1.5} /><circle cx="8" cy="21" r="3.5" stroke={B} strokeWidth={1.6} /><circle cx="18" cy="21" r="3.5" stroke={B} strokeWidth={1.6} /></Ico>,
  copy: <Ico s={28} v={28}><path d="M4 2H14V7M4 2V21H10" stroke={D} strokeWidth={1.5} /><path d="M10 7H20L26 13V27H10Z" fill="#fff" stroke={D} strokeWidth={1.5} /><path d="M20 7V13H26M14 18H22M14 22H22" stroke={D} /></Ico>,
  painter: <Ico s={28} v={28}><path d="M4 15L13 7L21 17L12 26C8 24 5 20 4 15Z" fill="#f09a2d" stroke="#bf5a0c" strokeWidth={1.3} /><path d="M15 8L20 3H25V8L20 14" fill="#fff" stroke={D} strokeWidth={1.5} /><path d="M9 17L13 21M8 21L11 24" stroke="#fff" /></Ico>,
  getData: <Ico s={48} v={48}><ellipse cx="19" cy="8" rx="14" ry="5.5" fill="#fff" stroke={D} strokeWidth={1.8} /><path d="M5 8V37C5 40 11 43 19 43H22M33 8V20" stroke={D} strokeWidth={1.8} /><rect x="22" y="21" width="23" height="24" fill="#fff" stroke={D} strokeWidth={1.4} /><rect x="22" y="21" width="23" height="5" fill="#a8a6a4" /><path d="M22 32H45M22 38.5H45M29.5 26V45M37 26V45" stroke={'#8a8886'} /></Ico>,
  excel: <Ico s={24} v={24}><path d="M3 1H13L20 8V23H3Z" fill="#fff" stroke={'#8a8886'} strokeWidth={1.3} /><path d="M13 1V8H20" stroke={'#8a8886'} /><rect x="10" y="10" width="13" height="13" fill="#107c41" /><text x="16.5" y="20.5" fontSize="10" fontWeight="700" fill="#fff" textAnchor="middle" fontFamily="Open Sans">X</text></Ico>,
  onelake: <Ico s={24} v={24}><circle cx="12" cy="12" r="10" fill="#fff" stroke={D} strokeWidth={2.2} /><path d="M14 4C7 6 6 14 9 17C12 20 18 18 21 13C17 15 12 14 14 4Z" fill={D} /></Ico>,
  sql: <Ico s={24} v={24}><path d="M3 1H12L18 7V23H3Z" fill="#fff" stroke={'#605e5c'} strokeWidth={1.3} /><path d="M12 1V7H18" stroke={'#605e5c'} /><path d="M11 11C11 9 22 9 22 11V22C22 24 11 24 11 22Z" fill="#fff" stroke="#d9730d" strokeWidth={1.5} /><path d="M11 11C11 13 22 13 22 11" stroke="#d9730d" strokeWidth={1.5} /></Ico>,
  enter: <Ico s={26} v={26}><rect x="2" y="3" width="23" height="22" fill="#fff" stroke={'#605e5c'} /><rect x="9" y="3" width="16" height="4" fill={G} /><path d="M2 12H25M2 18.500H25M9 7V25M17 7V25" stroke={'#8a8886'} /><path d="M5 0V8M1 4H9" stroke="#2f9e58" strokeWidth={2} /></Ico>,
  dataverse: <Ico s={26} v={26}><path d="M9 4C16 0 25 6 23 14C21 22 11 25 5 20C-1 14 2 7 9 4Z" stroke={D} strokeWidth={1.7} /><path d="M11 8C16 6 20 11 18 15C16 20 10 20 8 16C6 12 8 9 11 8Z" stroke={D} strokeWidth={1.7} /><circle cx="13" cy="13" r="2" stroke={D} /></Ico>,
  recent: <Ico s={26} v={26}><path d="M3 1H13L19 7V24H3Z" fill="#fff" stroke={'#605e5c'} strokeWidth={1.3} /><path d="M13 1V7H19" stroke={'#605e5c'} /><circle cx="17" cy="17" r="7" fill="#fff" stroke={B} strokeWidth={1.6} /><path d="M17 13V17H21" stroke={B} strokeWidth={1.4} /></Ico>,
  transform: <Ico s={50} v={50}><rect x="2" y="2" width="42" height="41" fill="#fff" stroke={D} strokeWidth={1.4} /><rect x="2" y="2" width="42" height="7" fill={'#a8a6a4'} stroke={D} /><path d="M2 20H44M2 31H44M16 9V43M30 9V43" stroke={'#a8a6a4'} strokeWidth={1.4} /><path d="M20 40L40 14C42 11 48 15 46 18L26 44L18 47Z" fill="#fff" stroke={B} strokeWidth={1.8} /><path d="M20 40L25 44L18 47Z" fill={B} /><path d="M23 36L29 41L44 20L38 16Z" fill={L} /></Ico>,
  refresh: <Ico s={48} v={48}><path d="M2 1H22L32 11V40H2Z" fill="#fff" stroke={D} strokeWidth={1.6} /><path d="M22 1V11H32" stroke={D} strokeWidth={1.5} /><path d="M22 30C22 24 28 19 34 20C38 20.500 41 23 42 26M42 19V26H35" stroke="#3c9a5f" strokeWidth={2} /><path d="M42 33C42 39 36 44 30 43C26 42.500 23 40 22 37M22 44V37H29" stroke="#3c9a5f" strokeWidth={2} /></Ico>,
  newVisual: <Ico s={26} v={26}><rect x="1" y="11" width="8" height="14" fill={L} stroke={B} strokeWidth={1.5} /><path d="M9 25V2H16V25" stroke={D} strokeWidth={1.4} /><rect x="16" y="7" width="7" height="10" fill={G} /><path d="M18 18V26M14 22H23" stroke="#2f9e58" strokeWidth={1.8} /></Ico>,
  textBox: <Ico s={28} v={28}><rect x="3" y="3" width="22" height="22" fill="#fff" stroke={'#3b3a39'} strokeWidth={1.2} /><path d="M9.500 20L14 8L18.500 20M11 16H17" stroke={'#3a8ad0'} strokeWidth={1.2} /><rect x="0.500" y="0.500" width="5" height="5" fill="#2b88d8" /><rect x="22.500" y="0.500" width="5" height="5" fill="#2b88d8" /><rect x="0.500" y="22.500" width="5" height="5" fill="#2b88d8" /><rect x="22.500" y="22.500" width="5" height="5" fill="#2b88d8" /></Ico>,
  moreVisuals: <Ico s={26} v={28}><path d="M2 27V12H9V27M9 27V2H15V27H2M15 8H21V14" stroke={D} strokeWidth={1.4} /><path d="M12 27L24 11C25 10 27 11 26 13L14 28Z" fill={L} stroke={B} strokeWidth={1.4} /></Ico>,
  fx: <Ico s={46} v={46}><rect x="2" y="18" width="13" height="25" fill="#e8e7e6" stroke="#c8c6c4" /><rect x="15" y="2" width="13" height="40" fill="#f5f4f3" stroke="#c8c6c4" /><rect x="28" y="10" width="12" height="14" fill="#cfe4f7" /><text x="32" y="40" fontSize="23" fontStyle="italic" fill="#b8b6b4" textAnchor="middle" fontFamily="Liberation Serif">fx</text></Ico>,
  newMeasure: <Ico s={44} v={44}><rect x="8" y="2" width="28" height="41" fill="#fff" stroke={'#605e5c'} strokeWidth={2} /><rect x="13" y="7" width="18" height="6" fill={L} stroke={B} /><path d="M13 19H17M20 19H24M27 19H31M13 26H17M20 26H24M27 26H31M13 33H17M20 33H24M27 33H31" stroke={'#444'} strokeWidth={4} /></Ico>,
  quickMeasure: <Ico s={46} v={46}><rect x="15" y="6" width="27" height="38" fill="#fff" stroke={'#605e5c'} strokeWidth={2} /><rect x="20" y="10" width="17" height="6" fill={G} /><path d="M20 24H24M27 24H31M34 24H38M20 31H24M27 31H31M34 31H38M20 38H24M27 38H31M34 38H38" stroke={'#444'} strokeWidth={4} /><path d="M10 1H25L18 13H25L6 30L11 17H3Z" fill="#f6b73c" stroke="#c55a0b" strokeWidth={1.6} /></Ico>,
  sens: <Ico s={46} v={46}><path d="M2 5H26L33 12V43H2Z" fill="#fff" stroke="#a6d2ee" strokeWidth={1.5} /><path d="M9 24L26 8L40 20L22 36Z" fill="#dceefa" /><path d="M30 2L44 12L36 20L24 10Z" fill="#a9d2ed" /><path d="M12 25L22 34M16 22L25 30" stroke="#a6d2ee" strokeWidth={1.5} /></Ico>,
  publish: <Ico s={46} v={46}><rect x="2" y="26" width="14" height="17" rx="3" stroke={D} strokeWidth={1.8} /><path d="M10 26V16C10 14 12 13 13 13H24C26 13 27 14 27 16V43H16M17 13V4C17 2 18 1 20 1H30C32 1 33 2 33 4V43H27" stroke={D} strokeWidth={1.8} /><path d="M31 45V23M23 31L31 23L39 31" stroke={'#2b88c8'} strokeWidth={2} /></Ico>,
  prep: <Ico s={38} v={44}><path d="M2 8H24M2 8V22H32V17" stroke={D} strokeWidth={1.7} /><rect x="7" y="12" width="6" height="6" fill={D} /><rect x="2" y="27" width="33" height="15" fill="#fff" stroke={D} strokeWidth={1.7} /><rect x="25" y="31" width="6" height="6" fill={D} /><path d="M29 0C30 6 31 8 37 9C31 10 30 12 29 18C28 12 27 10 21 9C27 8 28 6 29 0Z" fill="#fff" stroke={'#2b88c8'} strokeWidth={1.7} /><path d="M39 13C39 17 40 18 43 19C40 20 39 21 39 25C38 21 37 20 35 19C37 18 38 17 39 13Z" fill="#fff" stroke={'#2b88c8'} strokeWidth={1.5} /></Ico>,
  share: <Ico s={24} v={24}><path d="M2 8V22H20V17" stroke="#fff" strokeWidth={1.4} /><path d="M5 19C6 12 11 8 17 8V3L23 9.500L17 16V12C12 12 8 14 5 19Z" stroke="#fff" strokeWidth={1.4} /></Ico>,
  railReport: <Ico s={26} v={26}><path d="M2 1V25H25" stroke="#252423" strokeWidth={1.5} /><rect x="6" y="6" width="4" height="15" stroke="#252423" strokeWidth={1.3} /><rect x="12" y="12" width="4" height="9" stroke="#252423" strokeWidth={1.3} /><rect x="18" y="4" width="4" height="17" stroke="#252423" strokeWidth={1.3} /></Ico>,
  railTable: <Ico s={26} v={26}><rect x="1.500" y="2" width="23" height="23" stroke={'#8a8886'} strokeWidth={1.5} /><path d="M1.500 7.500H24.500" stroke={'#8a8886'} strokeWidth={2} /><path d="M1.500 13H24.500M1.500 19H24.500M9 7V25M17 7V25" stroke={'#8a8886'} strokeWidth={1.2} /></Ico>,
  railModel: <Ico s={30} v={30}><rect x="15" y="1" width="12" height="10" stroke={'#8a8886'} strokeWidth={1.3} /><path d="M15 6H27" stroke={'#8a8886'} /><rect x="2" y="9" width="12" height="10" stroke={'#8a8886'} strokeWidth={1.3} /><path d="M2 14H14" stroke={'#8a8886'} /><rect x="15" y="19" width="12" height="10" stroke={'#8a8886'} strokeWidth={1.3} /><path d="M15 24H27M8 19V24H15M15 6H8V9" stroke={'#8a8886'} /></Ico>,
  railDax: <Ico s={30} v={30}><path d="M7 16V2H18L25 8V20" stroke={'#8a8886'} strokeWidth={1.2} /><path d="M18 2V8H25" stroke={'#8a8886'} /><path d="M26 14C28 18 28 22 25 26" stroke={'#8a8886'} /><text x="1" y="27" fontSize="10.500" fontWeight="700" fill={'#8a8886'} fontFamily="Open Sans">DAX</text></Ico>,
  flashBars: <Ico s={36} v={36}><path d="M9 34V16H17V34M17 34V3H25V34M25 12H33V34H9" fill="#fff" stroke={D} strokeWidth={1.6} /><path d="M5 1H14L10 9H14L2 25L6 13H1Z" fill="#f6b73c" stroke="#c55a0b" strokeWidth={1.3} /></Ico>,
  brushPlus: <Ico s={36} v={36}><path d="M32 3L14 22L18 26L34 5Z" fill="#fff" stroke={D} strokeWidth={1.5} /><path d="M13 20C7 21 8 27 2 29C8 31 17 30 18 25Z" fill="#2b88d8" stroke={B} /><path d="M26 21V35M19 28H34" stroke="#4f9e63" strokeWidth={2} /></Ico>,
  funnelOutline: <Ico s={24} v={24}><path d="M1 2H23L15 12V23H10V12Z" stroke="#605e5c" strokeWidth={1.3} /></Ico>,
  focus: <Ico s={22} v={22}><path d="M20 12V21H1V2H10" stroke="#605e5c" strokeWidth={1.3} /><path d="M1 12H10V21" stroke="#605e5c" strokeWidth={1.3} /><path d="M12 10L21 1M15 1H21V7" stroke="#605e5c" strokeWidth={1.3} /></Ico>,
  collapse: <Ico s={22} v={20}><path d="M9 2L2 10L9 18M17 2L10 10L17 18" stroke="#252423" strokeWidth={1.4} /></Ico>,
  expand: <Ico s={20} v={20}><path d="M3 2L10 10L3 18M11 2L18 10L11 18" stroke="#252423" strokeWidth={1.2} /></Ico>,
  filterSide: <Ico s={20} v={20}><path d="M18 1V19L13 13H1L13 7Z" stroke="#252423" strokeWidth={1.7} /></Ico>,
  x: <Ico s={18} v={18}><path d="M2 2L16 16M16 2L2 16" stroke="#252423" strokeWidth={1.5} /></Ico>,
  right: <Ico s={16} v={16}><path d="M5 1L12 8L5 15" stroke="#252423" strokeWidth={1.3} /></Ico>,
  treeChev: <svg width={14} height={18} viewBox="0 0 14 18" fill="none"><path d="M2 1L11 9L2 17" stroke="#3b3a39" strokeWidth={1.3} /></svg>,
  tableGlyph: <Ico s={18} v={18}><rect x="1" y="1" width="16" height="16" rx="3" stroke="#252423" strokeWidth={1.5} /><path d="M1 6.500H17M1 11.500H17M6.500 1V17M11.500 1V17" stroke="#252423" strokeWidth={1.2} /></Ico>,
  searchPane: <Ico s={22} v={22}><circle cx="9" cy="9" r="7.500" stroke="#605e5c" strokeWidth={1.4} /><path d="M14.500 14.500L21 21" stroke="#605e5c" strokeWidth={1.5} /></Ico>,
  cyl: <Ico s={26} v={32}><ellipse cx="13" cy="6" rx="11" ry="4.500" stroke="#252423" strokeWidth={1.5} /><path d="M2 6V26C2 29 7 31 13 31S24 29 24 26V6" stroke="#252423" strokeWidth={1.5} /></Ico>,
  barsCyl: <Ico s={30} v={30}><path d="M2 28V14H9V28H2M9 28V3H16V28M16 10H24V15" stroke="#605e5c" strokeWidth={1.4} /><path d="M17 17C17 14 28 14 28 17V27C28 30 17 30 17 27Z" fill="#fff" stroke="#d9730d" strokeWidth={1.5} /><path d="M17 17C17 20 28 20 28 17" stroke="#d9730d" strokeWidth={1.3} /></Ico>,
  barsBrush: <Ico s={30} v={30}><path d="M2 26V12H9V22M9 20V2H16V15M16 7H23V11" stroke="#605e5c" strokeWidth={1.4} /><path d="M27 9L15 21L18 24L29 11Z" fill="#fff" stroke={D} strokeWidth={1.3} /><path d="M14 20C11 22 11 26 6 29C12 30 18 27 18 24Z" fill="#3a8ad0" /></Ico>,
  plus: <Ico s={26} v={26}><path d="M13 1V25M1 13H25" stroke="#252423" strokeWidth={1.6} /></Ico>,
  gear: <Ico s={30} v={30}><path d="M12 2H18L19 6L23 8L27 7L30 12L27 15L30 18L27 23L23 22L19 24L18 28H12L11 24L7 22L3 23L0 18L3 15L0 12L3 7L7 8L11 6Z" transform="translate(1 1) scale(.93)" stroke="#3b3a39" strokeWidth={1.8} /><circle cx="15" cy="15" r="5" stroke="#3b3a39" strokeWidth={1.8} /></Ico>,
  desktop: <Ico s={30} v={30}><rect x="2" y="3" width="26" height="18" stroke="#605e5c" strokeWidth={2} /><path d="M15 21V26M9 27H21" stroke="#605e5c" strokeWidth={2} /></Ico>,
  phone: <Ico s={30} v={32}><rect x="6" y="1" width="18" height="30" rx="2" stroke="#605e5c" strokeWidth={1.6} /><path d="M14 26H16" stroke="#605e5c" strokeWidth={2} /></Ico>,
  win: <Ico s={24} v={24}><path d="M0 3.500L10 2V11.500H0ZM11 1.800L24 0V11.500H11ZM0 12.500H10V22L0 20.500ZM11 12.500H24V24L11 22.200Z" fill="#fff" /></Ico>,
  taskSearch: <Ico s={26} v={26}><circle cx="15.500" cy="10" r="8" stroke="#222" strokeWidth={1.7} /><path d="M9.500 16L2 24" stroke="#222" strokeWidth={2} /></Ico>,
  taskView: <Ico s={28} v={34}><path d="M2 1V5M20 1V5M2 3H20M2 29V33M20 29V33M2 31H20" stroke="#fff" strokeWidth={1.2} /><rect x="2" y="9" width="19" height="15" stroke="#fff" strokeWidth={1.5} /><rect x="26" y="2" width="2" height="5" fill="#fff" /><rect x="26" y="13" width="2" height="6" fill="#fff" /><rect x="26" y="25" width="2" height="5" fill="#fff" /></Ico>,
  folder: <Ico s={34} v={34}><path d="M1 5C1 3 2 2 4 2H12L15 6H33V29C33 31 32 32 30 32H4C2 32 1 31 1 29Z" fill="#f5c24c" /><path d="M1 7H16L19 4H1Z" fill="#d9a02c" /><path d="M10 32V23C10 21 11 20 13 20H21C23 20 24 21 24 23V32H20V25H14V32Z" fill="#1f73c4" /></Ico>,
  pbi: <Ico s={32} v={40}><rect x="22" y="1" width="10" height="38" rx="1" fill="#d49a0e" /><rect x="12" y="11" width="14" height="28" rx="1" fill="#f0c020" /><rect x="2" y="22" width="14" height="17" rx="1" fill="#f7dc6a" /></Ico>,
  whatsapp: <Ico s={38} v={38}><path d="M19 3C10 3 3 10 3 19C3 22 4 25 5 27L3 35L11 33C13 34 16 35 19 35C28 35 35 28 35 19C35 10 28 3 19 3Z" stroke="#25d366" strokeWidth={3.2} /><path d="M13 11C11 13 11 17 14 21C17 25 22 28 26 27L28 24L23 21L21 23C19 22 17 20 16 18L18 16L15 11Z" fill="#25d366" /></Ico>,
  calc: <Ico s={30} v={38}><rect x="1" y="0" width="28" height="38" rx="3" fill="#8a9099" /><rect x="4" y="3" width="22" height="9" fill="#4fd4f5" /><path d="M6 15H11V20H6ZM13 15H18V20H13ZM6 22H11V27H6ZM13 22H18V27H13ZM6 29H11V35H6ZM13 29H18V35H13ZM20 15H25V20H20Z" fill="#d8dde3" /><rect x="20" y="22" width="5" height="13" fill="#1c4f8c" /></Ico>,
  chrome: <Ico s={36} v={36}><circle cx="18" cy="18" r="17" fill="#2da94f" /><path d="M18 1A17 17 0 0 1 33 10H18A8 8 0 0 0 10.500 14.500L3.500 9A17 17 0 0 1 18 1Z" fill="#e8402f" /><path d="M33 10A17 17 0 0 1 16 35L24 23A8 8 0 0 0 26 14Z" fill="#fbc116" /><circle cx="18" cy="18" r="8.500" fill="#fff" /><circle cx="18" cy="18" r="6.500" fill="#2a79e3" /></Ico>,
  tools: <Ico s={38} v={38}><rect x="2" y="1" width="15" height="30" rx="7" fill="#f2b824" /><circle cx="9" cy="7" r="5" fill="#f5e8c8" /><path d="M27 2H33V8M3 30V36H9" stroke="#5a8f4c" strokeWidth={2.2} /><path d="M18 36L32 18M32 36L18 18" stroke="#d8d8d8" strokeWidth={3} /><circle cx="33" cy="15" r="3" stroke="#d8d8d8" strokeWidth={2} /></Ico>,
  excelApp: <Ico s={36} v={36}><rect x="8" y="1" width="26" height="34" rx="2" fill="#21a366" /><rect x="8" y="1" width="13" height="11" fill="#21a366" /><rect x="21" y="1" width="13" height="11" fill="#33c481" /><rect x="21" y="12" width="13" height="11" fill="#107c41" /><rect x="8" y="23" width="26" height="12" fill="#185c37" /><rect x="2" y="9" width="18" height="18" rx="1" fill="#107c41" /><text x="11" y="23" fontSize="14" fontWeight="700" fill="#fff" textAnchor="middle" fontFamily="Open Sans">X</text></Ico>,
  wordApp: <Ico s={36} v={36}><rect x="8" y="1" width="26" height="34" rx="2" fill="#2b7cd3" /><rect x="8" y="1" width="26" height="11" fill="#41a5ee" /><rect x="8" y="23" width="26" height="12" fill="#185abd" /><rect x="2" y="9" width="18" height="18" rx="1" fill="#185abd" /><text x="11" y="23" fontSize="14" fontWeight="700" fill="#fff" textAnchor="middle" fontFamily="Open Sans">W</text></Ico>,
  edge: <Ico s={36} v={36}><path d="M18 1C28 1 35 8 35 17C35 23 30 26 25 25C20 24 20 20 22 18C22 12 17 9 12 11C6 13 3 18 3 22C2 10 9 1 18 1Z" fill="#49c9b5" /><path d="M3 22C3 31 10 35 18 35C23 35 27 33 29 30C24 32 15 31 13 24C12 19 15 14 20 13C14 10 3 12 3 22Z" fill="#1172c2" /></Ico>,
  vlc: <Ico s={36} v={40}><path d="M16 2H20L29 32H7Z" fill="#f48a12" /><path d="M13 13H23L25 20H11Z" fill="#e8e8e8" /><path d="M10 24C14 26 22 26 26 24L27 28H9Z" fill="#e8e8e8" /><path d="M3 31H33L35 38H1Z" fill="#f48a12" /></Ico>,
  weather: <Ico s={40} v={44}><circle cx="18" cy="24" r="11" fill="#f0922c" /><path d="M4 16C4 10 9 6 13 9C15 4 22 6 21 12H26C28 16 24 18 20 18H7C5 18 4 17 4 16Z" fill="#a6c4ea" /><path d="M18 34C18 29 24 26 27 29C30 26 35 29 34 34C36 38 32 40 28 40H22C18 40 16 37 18 34Z" fill="#a6c4ea" /></Ico>,
  note: <Ico s={30} v={34}><path d="M3 2H27V23H12L11 29L6 23H3Z" fill="#fff" /><path d="M8 8H21M8 13H21M8 18H17" stroke="#333" strokeWidth={1.5} /></Ico>,
  fit: <Ico s={22} v={22}><rect x="1" y="1" width="20" height="20" fill="#e8f1fa" stroke="#888" /><path d="M3 7V3H7M15 3H19V7M19 15V19H15M7 19H3V15" stroke="#444" strokeWidth={1.3} /></Ico>,
  eraser: <Ico s={18} v={18}><path d="M10 2L16 9L9 16H5L2 12Z" stroke="#75587a" strokeWidth={1.1} /></Ico>,
};

const Dots: React.FC<{ c?: string }> = ({ c = '#252423' }) => (
  <svg width={20} height={4} viewBox="0 0 20 4"><circle cx="2" cy="2" r="1.4" fill={c} /><circle cx="10" cy="2" r="1.4" fill={c} /><circle cx="18" cy="2" r="1.4" fill={c} /></svg>
);

const galleryIcons = ['stackedBar', 'stackedCol', 'clusteredBar', 'clusteredCol', 'lineCol', 'lineCol2', 'line', 'area', 'slicer', 'pie', 'donut', 'treemap', 'globe', 'gauge', 'card', 'multirow', 'table', 'matrix'];
const buildIcons = [
  'stackedBar', 'stackedCol', 'clusteredBar', 'clusteredCol', 'bar100', 'col100',
  'line', 'area', 'stackedArea', 'area100', 'lineCol', 'lineCol2',
  'ribbon', 'waterfall', 'funnel', 'scatter', 'pie', 'donut',
  'treemap', 'globe', 'filledMap', 'azure', 'gauge', 'card',
  'multirow', 'kpi', 'slicer', 'table', 'matrix', 'R',
  'Py', 'influencers', 'decomp', 'qna', 'narrative', 'trophy',
  'paginated', 'quickCard', 'quickSlicer', 'shapePin', 'powerApps', 'automate',
];

const bands = ['30000-40000', '40000-50000', '50000-60000', '60000-70000', '70000-80000', '80000-90000', 'Above 90000'];
const locations = [{ n: 'Kaduna', w: 443 }, { n: 'Abuja', w: 422 }, { n: 'Lagos', w: 294 }];
const handles: [string, string][] = [['0%', '0%'], ['50%', '0%'], ['100%', '0%'], ['0%', '50%'], ['100%', '50%'], ['0%', '100%'], ['50%', '100%'], ['100%', '100%']];

const Small: React.FC<{ icon: React.ReactNode; iw: number; label: string; chev?: number }> = ({ icon, iw, label, chev }) => (
  <SmallRow $iw={iw}><span>{icon}</span>{label}{chev !== undefined && <Chev $ml={chev}><ChevDown /></Chev>}</SmallRow>
);

export default function App() {
  return (
    <Page>
      <Global />
      <TitleBar>
        <TitleLeft>
          <QuickBtn $w={46}>{I.save}</QuickBtn>
          <QuickBtn $w={43}>{I.undo}</QuickBtn>
          <QuickBtn $w={23}>{I.redo}</QuickBtn>
          <TitleText>Palmoria Data&nbsp; •&nbsp; Last saved: Today at 8:08 PM</TitleText>
          <Caret />
        </TitleLeft>
        <SearchBar>{I.search}<span>Search</span></SearchBar>
        <TitleRight>
          <span>Sign in</span>
          <Avatar>{I.person}</Avatar>
          <WinBtn><svg width={16} height={16} viewBox="0 0 16 16"><path d="M0 8H16" stroke="#fff" strokeWidth={1.3} /></svg></WinBtn>
          <WinBtn><svg width={16} height={16} viewBox="0 0 16 16" fill="none"><rect x="1" y="1" width="14" height="14" rx="2" stroke="#fff" strokeWidth={1.3} /></svg></WinBtn>
          <WinBtn><svg width={16} height={16} viewBox="0 0 16 16"><path d="M1 1L15 15M15 1L1 15" stroke="#fff" strokeWidth={1.3} /></svg></WinBtn>
        </TitleRight>
      </TitleBar>

      <Ribbon>
        <TabRow>
          <Tab $w={30} $ml={34}>File</Tab>
          <Tab $w={58} $ml={57} $on>Home</Tab>
          <Tab $w={52} $ml={46}>Insert</Tab>
          <Tab $w={88} $ml={48}>Modeling</Tab>
          <Tab $w={44} $ml={48}>View</Tab>
          <Tab $w={84} $ml={47}>Optimize</Tab>
          <Tab $w={43} $ml={48}>Help</Tab>
          <ContextTab $w={113} $ml={23}>Format</ContextTab>
          <ContextTab $w={149} $ml={6}>Data / Drill</ContextTab>
          <ShareBtn>{I.share}<span>Share</span><svg width={16} height={10} viewBox="0 0 16 10" fill="none"><path d="M1 1L8 8L15 1" stroke="#fff" strokeWidth={1.4} /></svg></ShareBtn>
        </TabRow>
        <Groups>
          <Group $w={121}>
            <GroupBody>
              <Large $w={50} $ml={17} $dim><LargeIcon>{I.paste}</LargeIcon><LabelLine>Paste</LabelLine></Large>
              <SmallCol $ml={10}>
                <SmallRow $iw={28}><span>{I.cut}</span></SmallRow>
                <SmallRow $iw={28}><span>{I.copy}</span></SmallRow>
                <SmallRow $iw={28}><span>{I.painter}</span></SmallRow>
              </SmallCol>
            </GroupBody>
            <GroupLabel>Clipboard</GroupLabel>
          </Group>
          <Group $w={448}>
            <GroupBody>
              <Large $w={50} $ml={17}><LargeIcon $nudge={4}>{I.getData}</LargeIcon><LabelLine>Get</LabelLine><LabelLine>data<ChevDown /></LabelLine></Large>
              <SmallCol $w={185} $ml={14}>
                <Small icon={I.excel} iw={27} label="Excel workbook" />
                <Small icon={I.onelake} iw={27} label="OneLake catalog" chev={6} />
                <Small icon={I.sql} iw={27} label="SQL Server" />
              </SmallCol>
              <SmallCol>
                <Small icon={I.enter} iw={31} label="Enter data" />
                <Small icon={I.dataverse} iw={31} label="Dataverse" />
                <Small icon={I.recent} iw={31} label="Recent sources" chev={6} />
              </SmallCol>
            </GroupBody>
            <GroupLabel>Data</GroupLabel>
          </Group>
          <Group $w={172}>
            <GroupBody>
              <Large $w={82} $ml={13}><LargeIcon $nudge={4}>{I.transform}</LargeIcon><LabelLine>Transform</LabelLine><LabelLine>data<ChevDown /></LabelLine></Large>
              <Large $w={68}><LargeIcon $nudge={8}>{I.refresh}</LargeIcon><LabelLine>Refresh</LabelLine></Large>
            </GroupBody>
            <GroupLabel>Queries</GroupLabel>
          </Group>
          <Group $w={573}>
            <GroupBody>
              <Gallery>
                <GalleryGrid>
                  {galleryIcons.map(n => <GalleryCell key={n} $on={n === 'slicer'}><Mini n={n} s={26} /></GalleryCell>)}
                </GalleryGrid>
                <GalleryMore><ChevDown c="#252423" /></GalleryMore>
              </Gallery>
              <SmallCol $ml={11}>
                <Small icon={I.newVisual} iw={30} label="New visual" />
                <Small icon={I.textBox} iw={30} label="Text box" />
                <Small icon={I.moreVisuals} iw={30} label="More visuals" chev={6} />
              </SmallCol>
            </GroupBody>
            <GroupLabel>Insert</GroupLabel>
          </Group>
          <Group $w={278}>
            <GroupBody>
              <Large $w={88} $ml={22} $dim><LargeIcon>{I.fx}</LargeIcon><LabelLine>New visual</LabelLine><LabelLine>calculation<ChevDown c="#bebcba" /></LabelLine></Large>
              <Large $w={74} $ml={10}><LargeIcon>{I.newMeasure}</LargeIcon><LabelLine>New</LabelLine><LabelLine>measure</LabelLine></Large>
              <Large $w={72}><LargeIcon>{I.quickMeasure}</LargeIcon><LabelLine>Quick</LabelLine><LabelLine>measure</LabelLine></Large>
            </GroupBody>
            <GroupLabel>Calculations</GroupLabel>
          </Group>
          <Group $w={110}>
            <GroupBody>
              <Large $w={110} $dim><LargeIcon>{I.sens}</LargeIcon><LabelLine>Sensitivity</LabelLine><LabelLine><ChevDown c="#bebcba" /></LabelLine></Large>
            </GroupBody>
            <GroupLabel>Sensitivity</GroupLabel>
          </Group>
          <Group $w={87}>
            <GroupBody>
              <Large $w={87}><LargeIcon>{I.publish}</LargeIcon><LabelLine>Publish</LabelLine></Large>
            </GroupBody>
            <GroupLabel>Share</GroupLabel>
          </Group>
          <Group $w={131} $end>
            <GroupBody>
              <Large $w={102} $ml={16}><LargeIcon $nudge={4}>{I.prep}</LargeIcon><LeftLine>Prep data f</LeftLine><LabelLine>AI</LabelLine></Large>
            </GroupBody>
            <GroupLabel $pl={45}>Cop</GroupLabel>
            <CollapseCaret><svg width={14} height={9} viewBox="0 0 14 9" fill="none"><path d="M1 8L7 2L13 8" stroke="#252423" strokeWidth={2} /></svg></CollapseCaret>
          </Group>
        </Groups>
      </Ribbon>

      <Workspace>
        <LeftRail>
          <RailItem $on>{I.railReport}</RailItem>
          <RailItem>{I.railTable}</RailItem>
          <RailItem>{I.railModel}</RailItem>
          <RailItem>{I.railDax}</RailItem>
        </LeftRail>
        <Center>
          <CanvasRow>
            <ReportArea>
              <ReportPage>
                <Visual $h={668}>
                  <VisualTitle $h={32}>Gender by Salary Band</VisualTitle>
                  <Plot $top={39}>
                    <YTitle $w={25}>Salary Band</YTitle>
                    <Rows $gap={17}>
                      {bands.map(b => (
                        <BarRow key={b} $h={59}>
                          <CatLabel $w={91}>{b}</CatLabel>
                          <Bar style={{ width: 370 }} />
                        </BarRow>
                      ))}
                    </Rows>
                  </Plot>
                  <Ticks $n={3} $cell={195.5} $ml={18.5} $mt={37}><span>0</span><span>500</span><span>1000</span></Ticks>
                  <XTitle $w={624} $mt={3}>Gender count</XTitle>
                </Visual>
                <RightStack>
                  <Visual $h={340}>
                    <VisualTitle $h={27} $alt>Employees Below Minimum Salary by Location</VisualTitle>
                    <Plot $top={36}>
                      <YTitle $w={26} $alt>Location</YTitle>
                      <Rows $gap={17}>
                        {locations.map(l => (
                          <BarRow key={l.n} $h={54}>
                            <CatLabel $w={62} $alt>{l.n}</CatLabel>
                            <Bar style={{ width: l.w }} />
                          </BarRow>
                        ))}
                      </Rows>
                    </Plot>
                    <Ticks $n={7} $cell={88.6} $ml={44} $mt={35} $alt>
                      {[0, 50, 100, 150, 200, 250, 300].map(t => <span key={t}>{t}</span>)}
                    </Ticks>
                    <XTitle $w={708} $mt={4} $alt>Employees Below Minimum Salary</XTitle>
                  </Visual>
                  <Slicer>
                    <VisualHead>{I.funnelOutline}{I.focus}<Dots c="#605e5c" /></VisualHead>
                    <SlicerTools>{I.eraser}<svg width={14} height={10} viewBox="0 0 14 10" fill="none"><path d="M1 1L7 8L13 1" stroke="#75587a" /></svg></SlicerTools>
                    <SlicerTitle>Location</SlicerTitle>
                    <SlicerList>
                      {['Abuja', 'Kaduna', 'Lagos'].map(n => <SlicerItem key={n}><Check />{n}</SlicerItem>)}
                    </SlicerList>
                    {handles.map(([l, t]) => <Handle key={l + t} $l={l} $t={t} />)}
                  </Slicer>
                </RightStack>
                <Float $top={405}>{I.flashBars}</Float>
                <Float $top={465} $alt>{I.brushPlus}</Float>
              </ReportPage>
            </ReportArea>
            <FiltersPane>
              {I.collapse}
              <FilterIconSlot>{I.filterSide}</FilterIconSlot>
              <FiltersText>Filters</FiltersText>
            </FiltersPane>
          </CanvasRow>
          <PageBar>
            <Devices>
              <DeviceBtn $w={36} $on>{I.desktop}</DeviceBtn>
              <DeviceBtn $w={30} $ml={34}>{I.phone}</DeviceBtn>
              <PagerArrows><svg width={44} height={14} viewBox="0 0 44 14"><path d="M6 1L1 7L6 13ZM37 1L42 7L37 13Z" fill="#c8c6c4" /></svg></PagerArrows>
            </Devices>
            <PageTab $w={113}>Page 1</PageTab>
            <PageTab $w={115}>Page 2</PageTab>
            <PageTab $w={114}>Page 3</PageTab>
            <PageTab $w={117} $on>Page 4</PageTab>
            <AddPage><svg width={16} height={16} viewBox="0 0 16 16"><path d="M8 0V16M0 8H16" stroke="#fff" strokeWidth={3.4} /></svg></AddPage>
          </PageBar>
        </Center>

        <Pane>
          <PaneHead>
            <PaneTitle>Build</PaneTitle>
            <PaneTools><Dots />{I.expand}</PaneTools>
          </PaneHead>
          <BuildBody>
            <Caption>Suggestions</Caption>
            <SuggestBox>
              {buildIcons.map(n => (
                <SuggestCell key={n} $on={n === 'slicer'}>
                  {n === 'R' ? <LetterIcon $s={25}>R</LetterIcon> : n === 'Py' ? <LetterIcon $s={25}>Py</LetterIcon> : <Mini n={n} />}
                </SuggestCell>
              ))}
              <MoreDots><Dots /></MoreDots>
            </SuggestBox>
            <Caption $mt={17}>Field</Caption>
            <DropZone>
              <FieldPill><FieldName>Location</FieldName>{I.x}<FieldDivider />{I.right}</FieldPill>
              <AddData>+Add data</AddData>
            </DropZone>
          </BuildBody>
        </Pane>
        <Pane>
          <PaneHead>
            <PaneTitle>Data</PaneTitle>
            <PaneTools><Dots />{I.expand}</PaneTools>
          </PaneHead>
          <DataSearch>{I.searchPane}<span>Search</span></DataSearch>
          <Tree>
            {['bonus mapping', 'Bonus Rules', 'New', 'Palmoria Group emp-...'].map(n => (
              <TreeRow key={n}>
                {I.treeChev}
                <TreeGap $w={8} />
                {I.tableGlyph}
                <TreeGap $w={8} />
                {n}
                {n === 'New' && <Badge><svg width={10} height={8} viewBox="0 0 10 8" fill="none"><path d="M1 4L4 7L9 1" stroke="#fff" strokeWidth={1.6} /></svg></Badge>}
              </TreeRow>
            ))}
          </Tree>
        </Pane>
        <RightRail>
          <RailTab $h={48} $on>{I.cyl}</RailTab>
          <RailTab $h={48} $on>{I.barsCyl}</RailTab>
          <RailTab $h={48}>{I.barsBrush}</RailTab>
          <RailTab $h={48}>{I.plus}</RailTab>
          <RailBottom>{I.gear}</RailBottom>
        </RightRail>
      </Workspace>

      <StatusBar>
        <span>Page 4 of 4</span>
        <Zoom>
          <span>-</span>
          <ZoomTrack><ZoomThumb /><ZoomTick /></ZoomTrack>
          <span>+</span>
          <ZoomPct>63%</ZoomPct>
          <FitBox>{I.fit}</FitBox>
        </Zoom>
      </StatusBar>

      <Taskbar>
        <StartBtn>{I.win}</StartBtn>
        <TaskSearch>{I.taskSearch}<span>Type here to search</span></TaskSearch>
        <TaskApp>{I.taskView}</TaskApp>
        <TaskApp><RoundR>R</RoundR></TaskApp>
        <TaskApp $open>{I.folder}</TaskApp>
        <TaskApp $open $active $pl={5}>{I.pbi}</TaskApp>
        <TaskApp $open>{I.whatsapp}<CountBadge>2</CountBadge></TaskApp>
        <TaskApp $pl={7}>{I.calc}</TaskApp>
        <TaskApp $open>{I.chrome}</TaskApp>
        <TaskApp>{I.tools}</TaskApp>
        <TaskApp>{I.excelApp}</TaskApp>
        <TaskApp>{I.wordApp}</TaskApp>
        <TaskApp $open>{I.edge}</TaskApp>
        <TaskApp $open>{I.vlc}</TaskApp>
        <Tray>
          <WeatherWrap>{I.weather}<WeatherBadge>1</WeatherBadge></WeatherWrap>
          <Temp>27°C</Temp>
          <svg width={18} height={12} viewBox="0 0 18 12" fill="none"><path d="M1 11L9 2L17 11" stroke="#fff" strokeWidth={1.2} /></svg>
          <Clock><div>8:44 PM</div><div>07/05/2025</div></Clock>
          <Notify>{I.note}<TrayBadge>8</TrayBadge></Notify>
        </Tray>
      </Taskbar>
    </Page>
  );
}
